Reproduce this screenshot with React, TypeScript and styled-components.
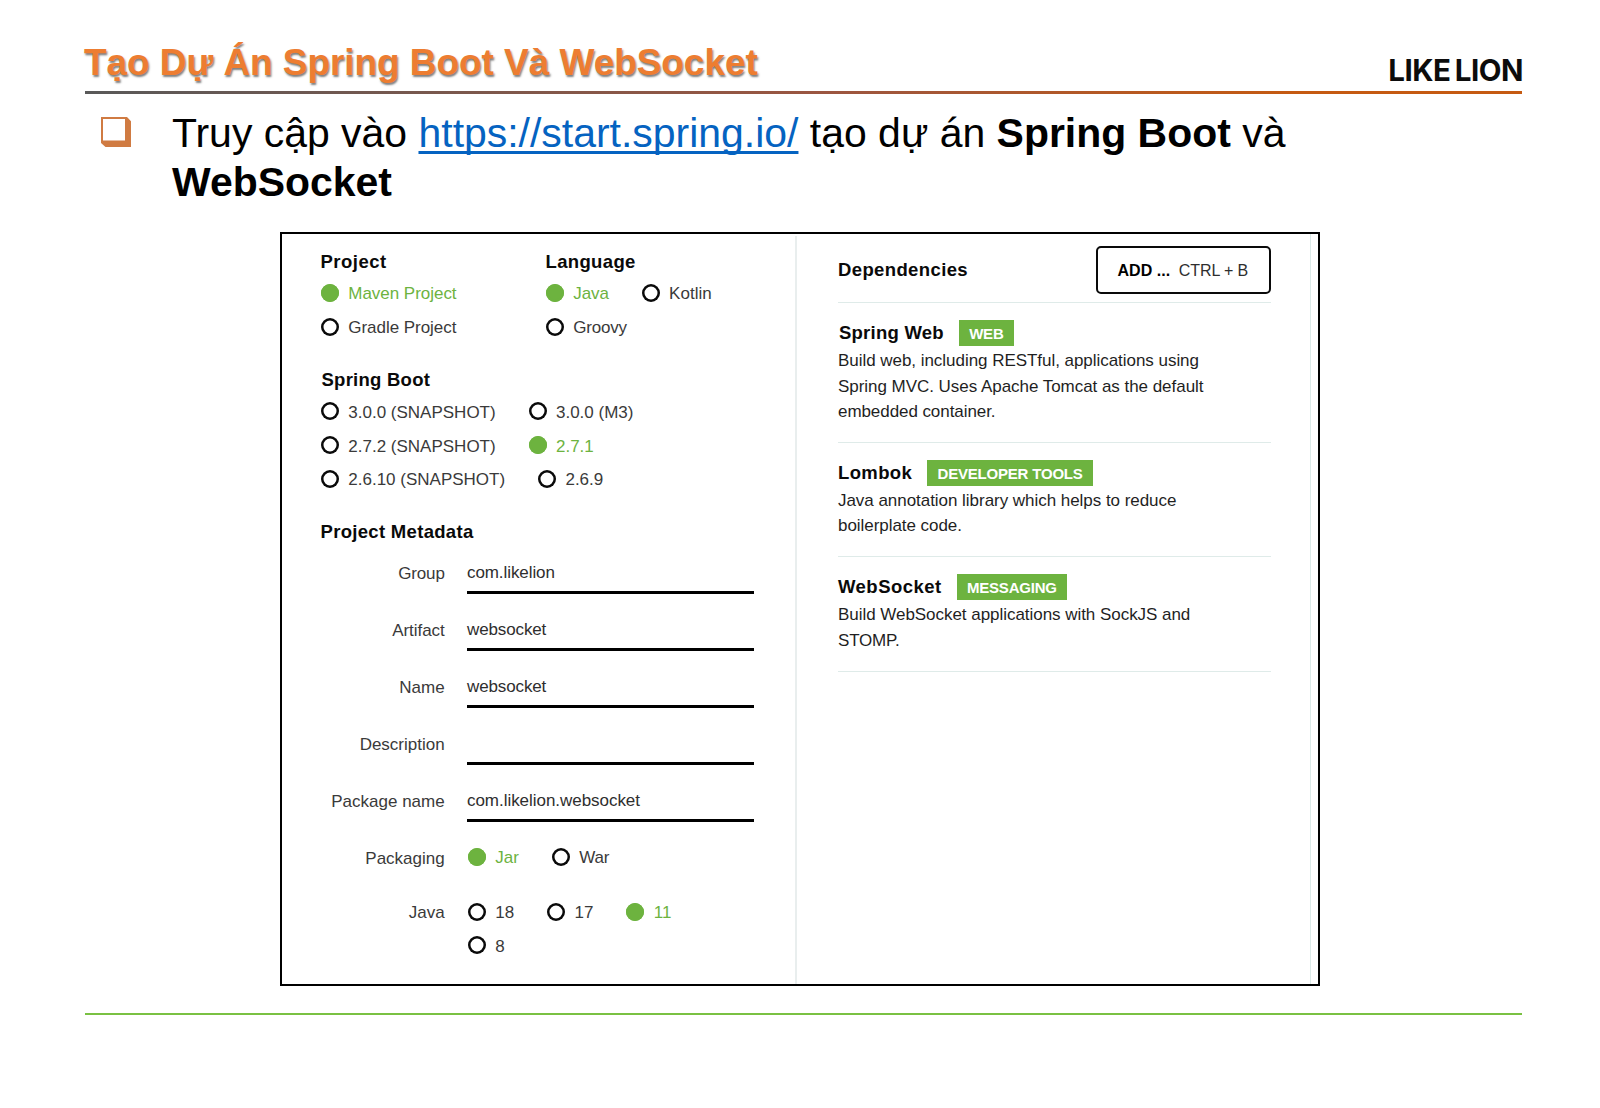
import React from "react";
import styled, { createGlobalStyle } from "styled-components";

const GREEN = "#6db33f";

const GlobalStyle = createGlobalStyle`
  html, body { margin: 0; padding: 0; background: #fff; }
  * { box-sizing: border-box; }
`;

const Slide = styled.main`
  width: 1600px;
  height: 1108px;
  overflow: hidden;
  background: #fff;
  color: #000;
  font-family: "Liberation Sans", Arial, sans-serif;
  display: flex;
  flex-direction: column;
`;

const Header = styled.header`
  height: 91px;
  margin: 0 78px 0 84px;
  padding-top: 40px;
  display: flex;
  justify-content: space-between;
  align-items: flex-start;
`;

const Title = styled.h1`
  margin: 0;
  font-size: 37px;
  line-height: 46px;
  font-weight: 700;
  letter-spacing: -0.06px;
  color: #ed7d31;
  white-space: nowrap;
  text-shadow: 1px 1.5px 2px rgba(0, 0, 0, 0.5);
`;

const Brand = styled.div`
  margin: 12px -1px 0 0;
  font-family: Inter, sans-serif;
  font-weight: 700;
  font-size: 29.5px;
  line-height: 36px;
  letter-spacing: -0.5px;
  word-spacing: -2px;
  color: #0c0c0c;
  white-space: nowrap;
`;

const HeaderRule = styled.div`
  height: 3px;
  flex: none;
  margin: 0 78px 0 85px;
  background: linear-gradient(90deg, #595959 0%, #9c5640 52%, #c55a11 84%, #c55a11 100%);
`;

const Bullet = styled.section`
  display: grid;
  grid-template-columns: 71.5px 1120px;
  margin-left: 100.5px;
  padding-top: 15px;
  height: 138px;
  flex: none;
`;

const BulletIcon = styled.svg`
  width: 30px;
  height: 30px;
  margin-top: 8px;
`;

const Lead = styled.p`
  margin: 0;
  font-size: 40.95px;
  line-height: 49px;
`;

const Link = styled.a`
  color: #0563c1;
  text-decoration: underline;
  text-decoration-thickness: 3px;
  text-underline-offset: 4px;
  text-decoration-skip-ink: none;
`;

const Panel = styled.section`
  flex: none;
  width: 1040px;
  height: 754px;
  margin-left: 280px;
  border: 2px solid #000;
  display: flex;
`;

const Settings = styled.div`
  width: 515px;
  margin-top: 2px;
  padding: 14px 0 0 38px;
  border-right: 2px solid #e9eeee;
`;

const Columns = styled.div`
  display: grid;
  grid-template-columns: 225px 1fr;
`;

const Group = styled.div<{ $top?: number }>`
  margin-top: ${(p) => p.$top ?? 0}px;
`;

const Heading = styled.h2<{ $track?: number; $indent?: number; $gap?: number }>`
  margin: 0 0 ${(p) => p.$gap ?? 3}px ${(p) => p.$indent ?? 0.5}px;
  font-size: 18.5px;
  line-height: 24px;
  font-weight: 700;
  letter-spacing: ${(p) => p.$track ?? 0.35}px;
  color: #0a0a0a;
  white-space: nowrap;
`;

const RadioRow = styled.div`
  display: flex;
  gap: 33px;
  height: 33.8px;
  margin-left: 1px;
  align-items: center;
`;

const RadioItem = styled.div<{ $on?: boolean; $track?: number }>`
  display: flex;
  align-items: center;
  gap: 9.3px;
  font-size: 17px;
  line-height: 20px;
  letter-spacing: ${(p) => p.$track ?? 0}px;
  color: ${(p) => (p.$on ? GREEN : "#3a3a3a")};
  white-space: nowrap;
`;

const Dot = styled.i<{ $on?: boolean }>`
  width: 18px;
  height: 18px;
  border-radius: 50%;
  box-shadow: inset 0 0 0 2.5px ${(p) => (p.$on ? GREEN : "#0a0a0a")};
  background: ${(p) => (p.$on ? GREEN : "#fff")};
`;

const RadioText = styled.span`
  padding-top: 2.5px;
`;

const Fields = styled.div`
  margin-top: 11.4px;
  display: flex;
  flex-direction: column;
  gap: 18.6px;
`;

const Field = styled.div`
  display: grid;
  grid-template-columns: 124.7px 287px;
  column-gap: 22.3px;
`;

const Label = styled.label<{ $top?: number; $track?: number }>`
  padding-top: ${(p) => p.$top ?? 8.7}px;
  text-align: right;
  font-size: 17px;
  line-height: 20px;
  letter-spacing: ${(p) => p.$track ?? 0}px;
  color: #3a3a3a;
  white-space: nowrap;
`;

const Input = styled.div<{ $track?: number }>`
  height: 38.4px;
  padding-top: 7.7px;
  border-bottom: 3px solid #000;
  font-size: 17px;
  line-height: 20px;
  letter-spacing: ${(p) => p.$track ?? 0}px;
  color: #2e2e2e;
`;

const VersionRows = styled.div`
  padding-top: 2px;
`;

const Dependencies = styled.div`
  width: 514px;
  padding: 12px 39px 0 41px;
  border-right: 1px solid #dbe9e7;
`;

const DependenciesHeader = styled.div`
  height: 56px;
  display: flex;
  align-items: flex-start;
  justify-content: space-between;
`;

const DependenciesTitle = styled(Heading)`
  margin: 12px 0 0;
`;

const AddButton = styled.button`
  width: 175px;
  height: 48px;
  padding: 2px 0 0 19.5px;
  display: flex;
  align-items: center;
  gap: 8.5px;
  border: 2px solid #0a0a0a;
  border-radius: 5px;
  background: #fff;
  font-family: inherit;
  font-size: 16px;
  line-height: 20px;
  color: #2e2e2e;
  white-space: nowrap;
`;

const AddText = styled.b`
  letter-spacing: 0.05px;
  color: #000;
`;

const Shortcut = styled.span`
  letter-spacing: -0.1px;
`;

const Dependency = styled.article`
  border-top: 1px solid #dfebe9;
  padding: 17px 0 16.5px;
  &:last-child {
    padding-bottom: 17px;
    border-bottom: 1px solid #dfebe9;
  }
`;

const DependencyHead = styled.div`
  display: flex;
  align-items: center;
  gap: 15px;
  height: 26px;
`;

const DependencyName = styled(Heading)`
  margin: 0 0 0 ${(p) => p.$indent ?? 0}px;
`;

const Badge = styled.span`
  height: 26px;
  padding: 0 10px 0 10.3px;
  background: ${GREEN};
  color: #fff;
  font-size: 15px;
  line-height: 27px;
  font-weight: 700;
  letter-spacing: -0.2px;
  white-space: nowrap;
`;

const Description = styled.p<{ $gap?: number }>`
  margin: ${(p) => p.$gap ?? 2.3}px 0 0;
  font-size: 17px;
  line-height: 25.6px;
  color: #1f1f1f;
  white-space: nowrap;
`;

const Line = styled.span<{ $track: number }>`
  display: block;
  letter-spacing: ${(p) => p.$track}px;
`;

const FooterRule = styled.div`
  flex: none;
  height: 2px;
  margin: 27px 78px 0 85px;
  background: #7ac143;
`;

type Option = { text: string; on?: boolean; track?: number };

const Radios = ({ options }: { options: Option[] }) => (
  <RadioRow>
    {options.map((o) => (
      <RadioItem key={o.text} $on={o.on} $track={o.track}>
        <Dot $on={o.on} />
        <RadioText>{o.text}</RadioText>
      </RadioItem>
    ))}
  </RadioRow>
);

const fields = [
  { label: "Group", value: "com.likelion", lt: -0.15, vt: -0.08 },
  { label: "Artifact", value: "websocket", lt: -0.05, vt: -0.12 },
  { label: "Name", value: "websocket", lt: 0, vt: -0.12 },
  { label: "Description", value: "", lt: 0, vt: 0 },
  { label: "Package name", value: "com.likelion.websocket", lt: 0, vt: -0.04 },
];

const dependencies = [
  {
    name: "Spring Web",
    track: 0.24,
    indent: 1,
    badge: "WEB",
    gap: 2.3,
    lines: [
      ["Build web, including RESTful, applications using", -0.04],
      ["Spring MVC. Uses Apache Tomcat as the default", -0.04],
      ["embedded container.", -0.07],
    ] as [string, number][],
  },
  {
    name: "Lombok",
    track: 0.38,
    indent: 0,
    badge: "DEVELOPER TOOLS",
    gap: 2.3,
    lines: [
      ["Java annotation library which helps to reduce", -0.04],
      ["boilerplate code.", -0.05],
    ] as [string, number][],
  },
  {
    name: "WebSocket",
    track: 0.47,
    indent: 0,
    badge: "MESSAGING",
    gap: 2.9,
    lines: [
      ["Build WebSocket applications with SockJS and", -0.04],
      ["STOMP.", -0.18],
    ] as [string, number][],
  },
];

export default function App() {
  return (
    <Slide>
      <GlobalStyle />
      <Header>
        <Title>Tạo Dự Án Spring Boot Và WebSocket</Title>
        <Brand>LIKE LION</Brand>
      </Header>
      <HeaderRule />
      <Bullet>
        <BulletIcon viewBox="0 0 30 30">
          <path
            fillRule="evenodd"
            fill="#d07b42"
            d="M0 0H26L30 4.2V30H4.5L0 26ZM2 2V23.5H24V2Z"
          />
        </BulletIcon>
        <Lead>
          Truy cập vào <Link>https://start.spring.io/</Link> tạo dự án <b>Spring Boot</b> và{" "}
          <b>WebSocket</b>
        </Lead>
      </Bullet>
      <Panel>
        <Settings>
          <Columns>
            <Group>
              <Heading $track={0.5} $gap={2}>Project</Heading>
              <Radios options={[{ text: "Maven Project", on: true, track: -0.03 }]} />
              <Radios options={[{ text: "Gradle Project", track: -0.04 }]} />
            </Group>
            <Group>
              <Heading $gap={2}>Language</Heading>
              <Radios options={[{ text: "Java", on: true, track: -0.1 }, { text: "Kotlin" }]} />
              <Radios options={[{ text: "Groovy", track: -0.2 }]} />
            </Group>
          </Columns>
          <Group $top={24}>
            <Heading $track={0.25} $indent={1.5}>Spring Boot</Heading>
            <Radios options={[{ text: "3.0.0 (SNAPSHOT)" }, { text: "3.0.0 (M3)" }]} />
            <Radios options={[{ text: "2.7.2 (SNAPSHOT)" }, { text: "2.7.1", on: true }]} />
            <Radios options={[{ text: "2.6.10 (SNAPSHOT)" }, { text: "2.6.9" }]} />
          </Group>
          <Group $top={24}>
            <Heading $track={0.31}>Project Metadata</Heading>
            <Fields>
              {fields.map((f) => (
                <Field key={f.label}>
                  <Label $track={f.lt}>{f.label}</Label>
                  <Input $track={f.vt}>{f.value}</Input>
                </Field>
              ))}
              <Field>
                <Label $top={8.5}>Packaging</Label>
                <Radios options={[{ text: "Jar", on: true }, { text: "War", track: -0.1 }]} />
              </Field>
              <Field>
                <Label $top={10}>Java</Label>
                <VersionRows>
                  <Radios options={[{ text: "18" }, { text: "17" }, { text: "11", on: true }]} />
                  <Radios options={[{ text: "8" }]} />
                </VersionRows>
              </Field>
            </Fields>
          </Group>
        </Settings>
        <Dependencies>
          <DependenciesHeader>
            <DependenciesTitle $track={0.38}>Dependencies</DependenciesTitle>
            <AddButton>
              <AddText>ADD ...</AddText>
              <Shortcut>CTRL + B</Shortcut>
            </AddButton>
          </DependenciesHeader>
          {dependencies.map((d) => (
            <Dependency key={d.name}>
              <DependencyHead>
                <DependencyName $track={d.track} $indent={d.indent}>{d.name}</DependencyName>
                <Badge>{d.badge}</Badge>
              </DependencyHead>
              <Description $gap={d.gap}>
                {d.lines.map(([text, track]) => (
                  <Line key={text} $track={track}>{text}</Line>
                ))}
              </Description>
            </Dependency>
          ))}
        </Dependencies>
      </Panel>
      <FooterRule />
    </Slide>
  );
}
